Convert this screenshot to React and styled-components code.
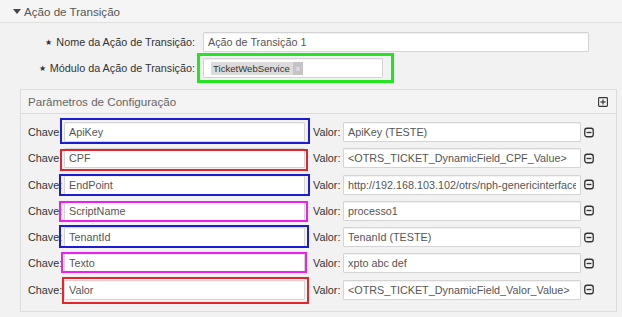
import styled, { createGlobalStyle } from 'styled-components';

const GlobalStyle = createGlobalStyle`
  html, body {
    margin: 0;
    background: #f2f2f2;
    font-family: "Liberation Sans", Arial, sans-serif;
  }
`;

const params = [
  { key: 'ApiKey', value: 'ApiKey (TESTE)', color: '#1c1cd2', box: [-4, -5, -2, -4] },
  { key: 'CPF', value: '<OTRS_TICKET_DynamicField_CPF_Value>', color: '#e3262b', box: [1, -3, -3, -4] },
  { key: 'EndPoint', value: 'http://192.168.103.102/otrs/nph-genericinterface.pl/Webservice/Teste', color: '#1c1cd2', box: [-1, -5, -1, -5] },
  { key: 'ScriptName', value: 'processo1', color: '#f01ef0', box: [0, -3, -1, -5] },
  { key: 'TenantId', value: 'TenanId (TESTE)', color: '#1c1cd2', box: [-2, -4, -1, -5] },
  { key: 'Texto', value: 'xpto abc def', color: '#f01ef0', box: [-1, -2, 0, -3] },
  { key: 'Valor', value: '<OTRS_TICKET_DynamicField_Valor_Value>', color: '#e3262b', box: [-3, -4, -4, -2] },
];

const MinusIcon = () => (
  <svg width="10" height="11" viewBox="0 0 10 11">
    <rect x="0.75" y="1.25" width="8.5" height="8.5" rx="2.2" fill="none" stroke="#333" strokeWidth="1.3" />
    <line x1="2.6" y1="5.5" x2="7.4" y2="5.5" stroke="#333" strokeWidth="1.3" />
  </svg>
);

const PlusIcon = () => (
  <svg width="10" height="10" viewBox="0 0 10 10">
    <rect x="0.6" y="0.6" width="8.8" height="8.8" rx="0.8" fill="none" stroke="#333" strokeWidth="1.1" />
    <line x1="2.4" y1="5" x2="7.6" y2="5" stroke="#333" strokeWidth="1.2" />
    <line x1="5" y1="2.4" x2="5" y2="7.6" stroke="#333" strokeWidth="1.2" />
  </svg>
);

const App = () => {
  return (
    <Page>
      <GlobalStyle />
      <SectionHeader>
        <Arrow />
        Ação de Transição
      </SectionHeader>

      <Form>
        <FieldRow>
          <FieldLabel>
            <Star>★</Star>Nome da Ação de Transição:
          </FieldLabel>
          <TextInput $width={386} readOnly value="Ação de Transição 1" />
        </FieldRow>
        <FieldRow>
          <FieldLabel>
            <Star>★</Star>Módulo da Ação de Transição:
          </FieldLabel>
          <Marked $color="#22e622" $thick={3} $box={[-5, -11, -5, -6]}>
            <TagInput>
              <Tag>
                TicketWebService
                <TagRemove>x</TagRemove>
              </Tag>
            </TagInput>
          </Marked>
        </FieldRow>
      </Form>

      <ParamBox>
        <ParamHeader>
          Parâmetros de Configuração
          <IconButton>
            <PlusIcon />
          </IconButton>
        </ParamHeader>
        <ParamList>
          {params.map((p) => (
            <ParamRow key={p.key}>
              <KeyLabel>Chave:</KeyLabel>
              <Marked $color={p.color} $thick={2} $box={p.box}>
                <TextInput $width={241} readOnly value={p.key} />
              </Marked>
              <ValueLabel>Valor:</ValueLabel>
              <TextInput $width={238} readOnly value={p.value} />
              <IconButton>
                <MinusIcon />
              </IconButton>
            </ParamRow>
          ))}
        </ParamList>
      </ParamBox>
    </Page>
  );
};

export default App;

const Page = styled.div`
  width: 622px;
  height: 317px;
  overflow: hidden;
  background: #f2f2f2;
`;

const SectionHeader = styled.div`
  height: 22px;
  display: flex;
  align-items: center;
  padding-left: 13px;
  background: #f5f5f5;
  border-bottom: 1px solid #dedede;
  font-size: 11.6px;
  color: #555;
`;

const Arrow = styled.span`
  width: 0;
  height: 0;
  border-left: 4px solid transparent;
  border-right: 4px solid transparent;
  border-top: 5px solid #444;
  margin-right: 3px;
  margin-top: 1px;
`;

const Form = styled.div`
  padding-top: 9px;
  display: flex;
  flex-direction: column;
  gap: 6px;
`;

const FieldRow = styled.div`
  display: flex;
  align-items: center;
`;

const FieldLabel = styled.div`
  width: 195px;
  margin-right: 8px;
  text-align: right;
  font-size: 10.8px;
  color: #333;
  white-space: nowrap;
`;

const Star = styled.span`
  font-size: 8px;
  margin-right: 4px;
  position: relative;
  top: -1px;
`;

const TextInput = styled.input`
  box-sizing: border-box;
  width: ${(p) => p.$width}px;
  height: 20px;
  padding: 0 4px;
  margin: 0;
  border: 1px solid #d4d4d4;
  border-radius: 1px;
  background: #fff;
  box-shadow: inset 0 1px 1px rgba(0, 0, 0, 0.06);
  font-family: "Liberation Sans", Arial, sans-serif;
  font-size: 10.8px;
  color: #555;
  outline: none;
`;

const TagInput = styled.div`
  box-sizing: border-box;
  width: 180px;
  height: 20px;
  padding: 0 7px;
  display: flex;
  align-items: center;
  border: 1px solid #d4d4d4;
  border-radius: 1px;
  background: #fff;
  box-shadow: inset 0 1px 1px rgba(0, 0, 0, 0.06);
`;

const Tag = styled.span`
  display: flex;
  align-items: center;
  height: 13px;
  padding-left: 2px;
  background: #dcdcdc;
  font-size: 9.6px;
  color: #333;
  white-space: nowrap;
`;

const TagRemove = styled.span`
  display: flex;
  align-items: center;
  justify-content: center;
  width: 10px;
  height: 13px;
  margin-left: 3px;
  background: #c4c4c4;
  color: #f4f4f4;
  font-size: 8px;
`;

const Marked = styled.div`
  position: relative;
  display: flex;

  &::after {
    content: '';
    position: absolute;
    top: ${(p) => p.$box[0]}px;
    right: ${(p) => p.$box[1]}px;
    bottom: ${(p) => p.$box[2]}px;
    left: ${(p) => p.$box[3]}px;
    border: ${(p) => p.$thick}px solid ${(p) => p.$color};
    pointer-events: none;
  }
`;

const ParamBox = styled.div`
  margin: 11px 5px 0 20px;
  border: 1px solid #dcdcdc;
  background: #f2f2f2;
`;

const ParamHeader = styled.div`
  height: 23px;
  display: flex;
  align-items: center;
  justify-content: space-between;
  padding: 0 8px 0 7px;
  border-bottom: 1px solid #dcdcdc;
  background: #f4f4f4;
  font-size: 11.6px;
  color: #666;
`;

const IconButton = styled.span`
  display: flex;
  align-items: center;
  margin-left: 3px;
`;

const ParamList = styled.div`
  display: flex;
  flex-direction: column;
  gap: 6.3px;
  padding: 8px 7px 11px 7px;
`;

const ParamRow = styled.div`
  display: flex;
  align-items: center;
`;

const KeyLabel = styled.span`
  width: 36px;
  font-size: 10.8px;
  color: #333;
  white-space: nowrap;
`;

const ValueLabel = styled.span`
  width: 30px;
  margin-left: 8px;
  font-size: 10.8px;
  color: #333;
  white-space: nowrap;
`;
